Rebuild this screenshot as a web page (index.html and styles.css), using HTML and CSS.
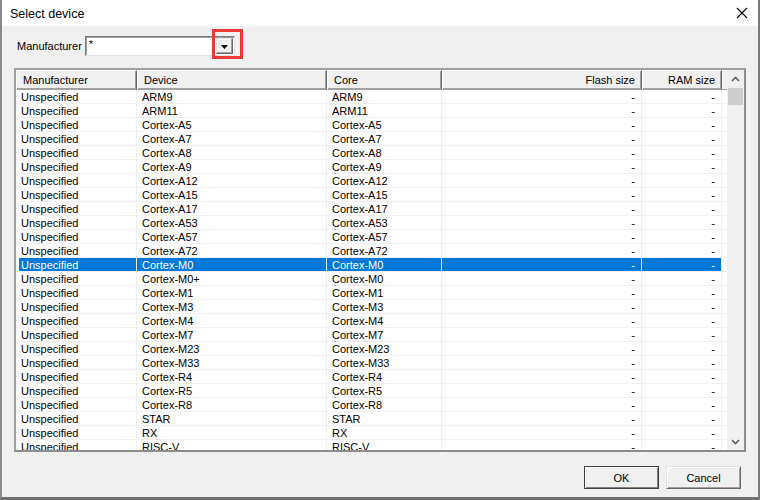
FILE: index.html
```html
<!DOCTYPE html>
<html>
<head>
<meta charset="utf-8">
<link rel="stylesheet" href="styles.css">
</head>
<body>
<div class="window">
  <div class="titlebar">
    <span class="title">Select device</span>
    <svg class="close" width="12" height="12" viewBox="0 0 12 12"><path d="M1 1 L11 11 M11 1 L1 11" stroke="#000" stroke-width="1.1" fill="none"/></svg>
  </div>
  <div class="content">
    <div class="filter">
      <span class="label">Manufacturer</span>
      <div class="combo">
        <span class="combo-text">*</span>
        <div class="drop"><svg width="7" height="4" viewBox="0 0 7 4"><path d="M0 0 H7 L3.5 4 Z" fill="#000"/></svg></div>
        <div class="mark"></div>
      </div>
    </div>
    <div class="list">
      <div class="list-main">
        <div class="header">
          <div class="h">Manufacturer</div>
          <div class="h">Device</div>
          <div class="h">Core</div>
          <div class="h r">Flash size</div>
          <div class="h r">RAM size</div>
          <div class="h fill"></div>
        </div>
        <div class="rows" id="rows"></div>
      </div>
      <div class="scrollbar">
        <div class="sb-btn"><svg width="9" height="6" viewBox="0 0 9 6"><path d="M1 5 L4.5 1.5 L8 5" stroke="#606060" stroke-width="1.6" fill="none"/></svg></div>
        <div class="sb-track"><div class="thumb"></div></div>
        <div class="sb-btn"><svg width="9" height="6" viewBox="0 0 9 6"><path d="M1 1 L4.5 4.5 L8 1" stroke="#606060" stroke-width="1.6" fill="none"/></svg></div>
      </div>
    </div>
    <div class="buttons">
      <button class="btn default">OK</button>
      <button class="btn">Cancel</button>
    </div>
  </div>
</div>
<script>
var data = [
 ["ARM9","ARM9"],["ARM11","ARM11"],["Cortex-A5","Cortex-A5"],["Cortex-A7","Cortex-A7"],
 ["Cortex-A8","Cortex-A8"],["Cortex-A9","Cortex-A9"],["Cortex-A12","Cortex-A12"],["Cortex-A15","Cortex-A15"],
 ["Cortex-A17","Cortex-A17"],["Cortex-A53","Cortex-A53"],["Cortex-A57","Cortex-A57"],["Cortex-A72","Cortex-A72"],
 ["Cortex-M0","Cortex-M0"],["Cortex-M0+","Cortex-M0"],["Cortex-M1","Cortex-M1"],["Cortex-M3","Cortex-M3"],
 ["Cortex-M4","Cortex-M4"],["Cortex-M7","Cortex-M7"],["Cortex-M23","Cortex-M23"],["Cortex-M33","Cortex-M33"],
 ["Cortex-R4","Cortex-R4"],["Cortex-R5","Cortex-R5"],["Cortex-R8","Cortex-R8"],["STAR","STAR"],
 ["RX","RX"],["RISC-V","RISC-V"]
];
var rows = document.getElementById("rows");
data.forEach(function(d, i){
  var r = document.createElement("div");
  r.className = "row" + (i === 12 ? " sel" : "");
  var cells = ["Unspecified", d[0], d[1], "-", "-", ""];
  cells.forEach(function(t, j){
    var c = document.createElement("div");
    c.className = "c" + (j === 3 || j === 4 ? " r" : "") + (j === 5 ? " fill" : "");
    c.textContent = t;
    r.appendChild(c);
  });
  rows.appendChild(r);
});
</script>
</body>
</html>
```
FILE: styles.css
```css
* { box-sizing: border-box; }
html, body { margin: 0; padding: 0; }
body {
  width: 760px;
  height: 500px;
  overflow: hidden;
  font-family: "Liberation Sans", Arial, sans-serif;
  font-size: 11px;
  color: #000;
  background: #fff;
}
.window {
  width: 760px;
  height: 500px;
  border-left: 2px solid #8a8a8a;
  border-right: 2px solid #7a7a7a;
  border-bottom: 3px solid #707070;
  background: #f0f0f0;
  display: flex;
  flex-direction: column;
}
.titlebar {
  height: 26px;
  background: #fff;
  display: flex;
  align-items: center;
  justify-content: space-between;
  padding: 0 8px 0 8px;
}
.title {
  font-size: 12.5px;
  padding-top: 1px;
}
.close { display: block; margin-right: 2px; }
.content {
  flex: 1;
  padding: 10px 12px 0 12px;
  display: flex;
  flex-direction: column;
}
.filter {
  display: flex;
  align-items: center;
  height: 20px;
  padding-left: 3px;
  gap: 3px;
}
.combo {
  position: relative;
  width: 150px;
  height: 20px;
  background: #fff;
  border: 1px solid;
  border-color: #7a7a7a #e3e3e3 #e3e3e3 #7a7a7a;
  box-shadow: inset 1px 1px #a0a0a0;
}
.combo-text {
  position: absolute;
  left: 3px;
  top: 1px;
  font-size: 11px;
  line-height: 13px;
}
.drop {
  position: absolute;
  right: 1px;
  top: 1px;
  width: 17px;
  height: 16px;
  background: #f0f0f0;
  border: 1px solid;
  border-color: #e3e3e3 #696969 #696969 #e3e3e3;
  box-shadow: inset -1px -1px #a0a0a0, inset 1px 1px #fff;
  display: flex;
  align-items: center;
  justify-content: center;
}
.drop svg { display: block; margin-top: 1px; }
.mark {
  position: absolute;
  left: 126px;
  top: -8px;
  width: 31px;
  height: 30px;
  border: 3px solid #ec3a3a;
}
.list {
  margin-top: 12px;
  height: 384px;
  display: flex;
  border: 2px solid;
  border-color: #a0a0a0 #8c8c8c #8c8c8c #a0a0a0;
  background: #fff;
}
.list-main {
  width: 711px;
  display: flex;
  flex-direction: column;
  overflow: hidden;
}
.header {
  display: grid;
  grid-template-columns: 121px 190px 115px 200px 80px 5px;
  height: 20px;
  background: #f0f0f0;
  flex: none;
}
.h {
  border-top: 1px solid #fff;
  border-left: 1px solid #fff;
  border-right: 1px solid #696969;
  border-bottom: 1px solid #a0a0a0;
  box-shadow: inset -1px -1px #a0a0a0;
  padding: 2px 5px 0 6px;
  line-height: 14px;
  white-space: nowrap;
}
.h.r { text-align: right; padding-right: 6px; }
.h.fill { border: none; border-top: 1px solid #fff; border-bottom: 1px solid #a0a0a0; box-shadow: none; }
.rows { flex: 1; overflow: hidden; }
.row {
  display: grid;
  grid-template-columns: 121px 190px 115px 200px 80px 5px;
  height: 14px;
  border-bottom: 1px solid #f0f0f0;
}
.c {
  height: 13px;
  line-height: 14px;
  padding: 0 5px 0 5px;
  border-right: 1px solid #f0f0f0;
  white-space: nowrap;
  overflow: hidden;
}
.c.r { text-align: right; padding-right: 6px; }
.c.fill { border-right: none; }
.row.sel .c { background: #0078d7; color: #fff; }
.row.sel .c:first-child { box-shadow: inset 3px 0 #fff; }
.row.sel .c.fill { background: #fff; }
.scrollbar {
  width: 17px;
  background: #f0f0f0;
  display: flex;
  flex-direction: column;
}
.sb-btn {
  height: 17px;
  display: flex;
  align-items: center;
  justify-content: center;
  flex: none;
}
.sb-btn svg { display: block; }
.sb-track { flex: 1; }
.thumb {
  margin: 1px 1px 0 1px;
  height: 17px;
  background: #cdcdcd;
}
.buttons {
  display: flex;
  justify-content: flex-end;
  gap: 7px;
  padding-right: 5px;
  margin-top: 14px;
}
.btn {
  width: 75px;
  height: 23px;
  font-family: "Liberation Sans", Arial, sans-serif;
  font-size: 11px;
  color: #000;
  background: #f0f0f0;
  border: 1px solid;
  border-color: #e3e3e3 #696969 #696969 #e3e3e3;
  box-shadow: inset 1px 1px #fff, inset -1px -1px #a0a0a0;
  padding: 0;
}
.btn.default {
  border-color: #404040;
  box-shadow: inset 1px 1px #fff, inset -1px -1px #808080;
}
```
